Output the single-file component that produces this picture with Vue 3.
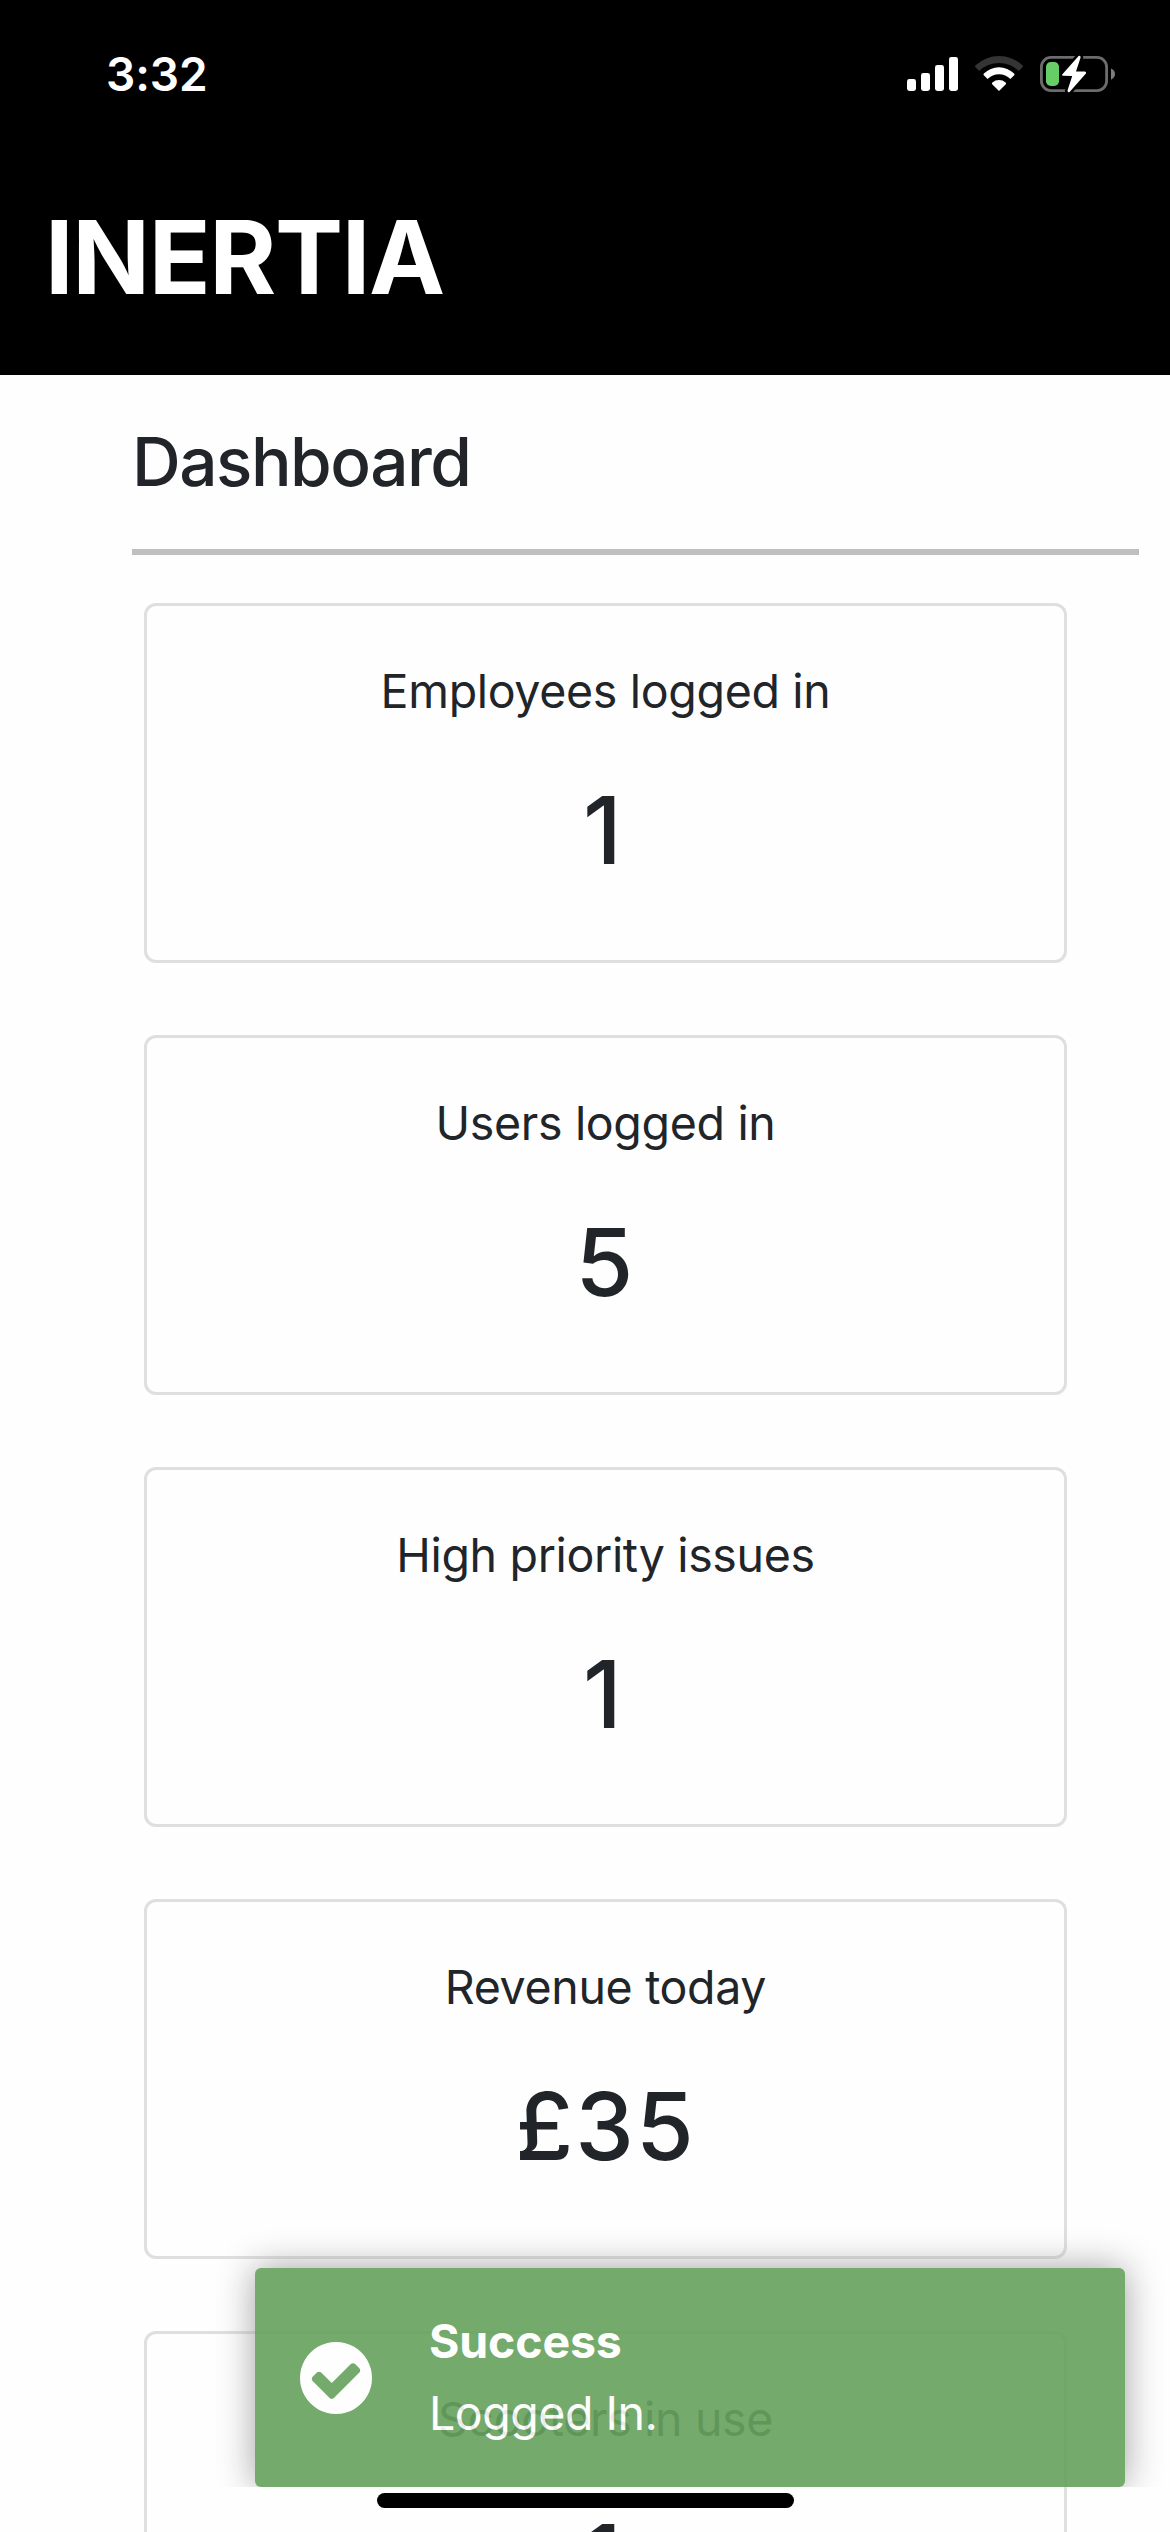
<script setup>
const cards = [
  { title: 'Employees logged in', value: '1' },
  { title: 'Users logged in', value: '5' },
  { title: 'High priority issues', value: '1' },
  { title: 'Revenue today', value: '£35' },
  { title: 'Scooters in use', value: '1' }
]
</script>

<template>
  <div class="screen">
    <header class="top">
      <div class="status">
        <span class="time">3:32</span>
        <div class="indicators">
          <svg class="signal" width="52" height="34" viewBox="0 0 52 34" fill="#fff">
            <rect x="0" y="22" width="9" height="12" rx="2.4" />
            <rect x="14" y="16" width="9" height="18" rx="2.4" />
            <rect x="28" y="8" width="9" height="26" rx="2.4" />
            <rect x="42" y="0" width="9" height="34" rx="2.4" />
          </svg>
          <svg class="wifi" width="48" height="36" viewBox="0 0 48 36">
            <path d="M4.2 16 L0.5 12.2 Q-0.4 11.2 0.6 10.3 A34 34 0 0 1 47.4 10.3 Q48.4 11.2 47.5 12.2 L43.8 16 A28.3 28.3 0 0 0 4.2 16Z" fill="#343434" />
            <path d="M12.6 24 L8.8 20.2 Q8 19.3 8.9 18.4 A21.8 21.8 0 0 1 39.1 18.4 Q40 19.3 39.2 20.2 L35.4 24 A16.2 16.2 0 0 0 12.6 24Z" fill="#fff" />
            <path d="M24 36 L17.2 29.2 Q16.4 28.2 17.4 27.4 A10.2 10.2 0 0 1 30.6 27.4 Q31.6 28.2 30.8 29.2Z" fill="#fff" />
          </svg>
          <svg class="battery" width="76" height="38" viewBox="0 0 76 38">
            <rect x="1.4" y="2.4" width="65.2" height="33.2" rx="9.6" fill="none" stroke="#6c6c6c" stroke-width="2.8" />
            <path d="M71 13.5 C73.6 14.6 75 16.7 75 19.1 C75 21.5 73.6 23.6 71 24.7Z" fill="#7d7d7d" />
            <rect x="6" y="7" width="13" height="24" rx="4.8" fill="#67ce67" />
            <path d="M38.6 1.1 L22.4 19.2 Q21.5 20.6 23.2 20.8 L32.2 21 L27.5 35.6 Q27.6 38 29.6 36.9 L45.7 18.7 Q46.8 17 44.9 16.6 L36 16.4 L40.6 2.4 Q40.5 -0.1 38.6 1.1Z" fill="#fff" stroke="#000" stroke-width="5.2" paint-order="stroke" />
          </svg>
        </div>
      </div>
      <div class="brand">INERTIA</div>
    </header>

    <main class="page">
      <h1 class="heading">Dashboard</h1>
      <div class="rule"></div>
      <section class="cards">
        <article v-for="card in cards" :key="card.title" class="card">
          <div class="title">{{ card.title }}</div>
          <div class="value" :class="{ single: card.value === '1' }">{{ card.value }}</div>
        </article>
      </section>
    </main>

    <div class="toast">
      <svg class="check" width="72" height="72" viewBox="128 128 1536 1536" fill="#fff">
        <path d="M1412 734q0-28-18-46l-91-90q-19-19-45-19t-45 19l-408 407-226-226q-19-19-45-19t-45 19l-91 90q-18 18-18 46 0 27 18 45l362 362q19 19 45 19 27 0 46-19l543-543q18-18 18-45zm252 162q0 209-103 385.500t-279.500 279.500-385.500 103-385.500-103-279.500-279.500-103-385.500 103-385.500 279.500-279.500 385.500-103 385.500 103 279.500 279.500 103 385.500z" />
      </svg>
      <div class="message">
        <div class="toast-title">Success</div>
        <div class="toast-text">Logged In.</div>
      </div>
    </div>
    <div class="home"></div>
  </div>
</template>

<style>
body {
  background: #fefefe;
}
</style>

<style scoped>
.screen {
  position: relative;
  width: 1170px;
  height: 2532px;
  overflow: hidden;
  background: #fefefe;
  color: #212529;
  font-family: Inter, "Liberation Sans", sans-serif;
  font-size: 46.5px;
}

.top {
  box-sizing: border-box;
  height: 375px;
  padding: 46px 0 0 45px;
  background: #000;
  color: #fff;
}

.status {
  display: flex;
  justify-content: space-between;
  padding: 0 54px 0 61px;
}

.time {
  font-size: 46px;
  line-height: 56px;
  font-weight: 600;
  letter-spacing: -0.1px;
}

.indicators {
  display: flex;
  align-items: flex-start;
}

.signal {
  margin: 11px 16px 0 0;
}

.wifi {
  margin: 9px 17px 0 0;
}

.battery {
  margin-top: 9px;
}

.brand {
  margin-top: 93px;
  font-size: 102px;
  line-height: 124px;
  font-weight: 700;
  letter-spacing: -1.33px;
}

.page {
  padding: 46px 31px 0 132px;
}

.heading {
  margin: 0;
  font-size: 67.5px;
  line-height: 81px;
  font-weight: 500;
  letter-spacing: -1.5px;
}

.rule {
  height: 6px;
  margin-top: 47px;
  background: #bfbfbf;
}

.cards {
  display: flex;
  flex-direction: column;
  gap: 72px;
  padding: 48px 72px 0 12px;
}

.card {
  box-sizing: border-box;
  flex: none;
  height: 360px;
  padding-top: 49px;
  border: 3px solid #dfdfdf;
  border-radius: 12px;
  text-align: center;
}

.title {
  line-height: 72px;
  letter-spacing: -0.33px;
}

.value {
  margin-top: 46px;
  font-size: 93.5px;
  line-height: 114px;
  font-weight: 500;
  letter-spacing: 2px;
}

.value.single {
  letter-spacing: 6px;
}

.toast {
  position: absolute;
  left: 255px;
  bottom: 45px;
  box-sizing: border-box;
  display: flex;
  align-items: flex-start;
  width: 870px;
  height: 219px;
  padding: 37px 45px 0;
  border-radius: 6px;
  background: #67a25e;
  box-shadow: 0 0 36px #999;
  clip-path: inset(-60px -45px 0 -60px);
  color: #fff;
  opacity: 0.91;
}

.check {
  margin-top: 37px;
}

.message {
  margin-left: 57px;
  line-height: 72px;
}

.toast-title {
  font-weight: 700;
  letter-spacing: -0.18px;
}

.toast-text {
  letter-spacing: -0.48px;
}

.home {
  position: absolute;
  left: 377px;
  bottom: 24px;
  width: 417px;
  height: 15px;
  border-radius: 8px;
  background: #000;
}
</style>
